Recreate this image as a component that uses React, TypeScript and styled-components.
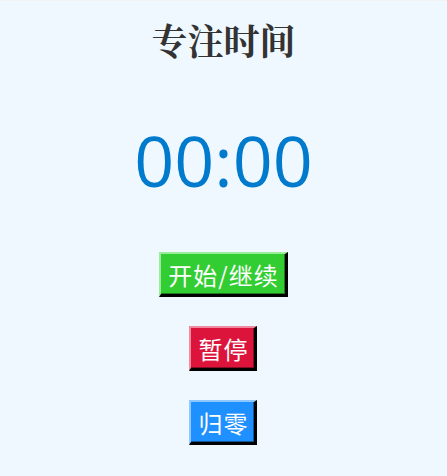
import React from "react";
import styled, { createGlobalStyle } from "styled-components";

const GlobalStyle = createGlobalStyle`
  html, body {
    margin: 0;
    padding: 0;
    background: #f0f8ff;
  }
  body {
    border-top: 1px solid #f2f2f2;
  }
`;

const Page = styled.div`
  display: flex;
  flex-direction: column;
  align-items: center;
  font-family: "Liberation Sans", "Noto Sans CJK SC", sans-serif;
  min-height: 475px;
`;

const Title = styled.h1`
  margin: 22px 0 0;
  font-family: "Liberation Serif", "Noto Serif CJK SC", serif;
  font-size: 36px;
  font-weight: bold;
  color: #333;
  line-height: 40px;
`;

const Timer = styled.div`
  margin-top: 57px;
  font-family: "Open Sans", "Noto Sans", sans-serif;
  font-size: 70px;
  line-height: 80px;
  color: #007acc;
`;

const Controls = styled.div`
  margin-top: 52px;
  display: flex;
  flex-direction: column;
  align-items: center;
  gap: 29px;
`;

const Button = styled.button<{ $bg: string; $light: string; $dark: string }>`
  background: ${(p) => p.$bg};
  color: #fff;
  border-style: solid;
  border-width: 2px 3px 3px 2px;
  border-color: ${(p) => p.$light} #000 #000 ${(p) => p.$light};
  box-shadow: inset -1px -1px 0 ${(p) => p.$dark};
  font-family: "Noto Sans CJK SC", sans-serif;
  font-size: 24px;
  line-height: 35px;
  letter-spacing: 1px;
  padding: 3px 6px 2px 7px;
  cursor: pointer;
`;

export default function App() {
  return (
    <>
      <GlobalStyle />
      <Page>
        <Title>专注时间</Title>
        <Timer>00:00</Timer>
        <Controls>
          <Button $bg="#32cd32" $light="#98ee98" $dark="#1e7a1e">开始/继续</Button>
          <Button $bg="#dc143c" $light="#ee8a9e" $dark="#840c24">暂停</Button>
          <Button $bg="#1e90ff" $light="#8fc8ff" $dark="#125699">归零</Button>
        </Controls>
      </Page>
    </>
  );
}
